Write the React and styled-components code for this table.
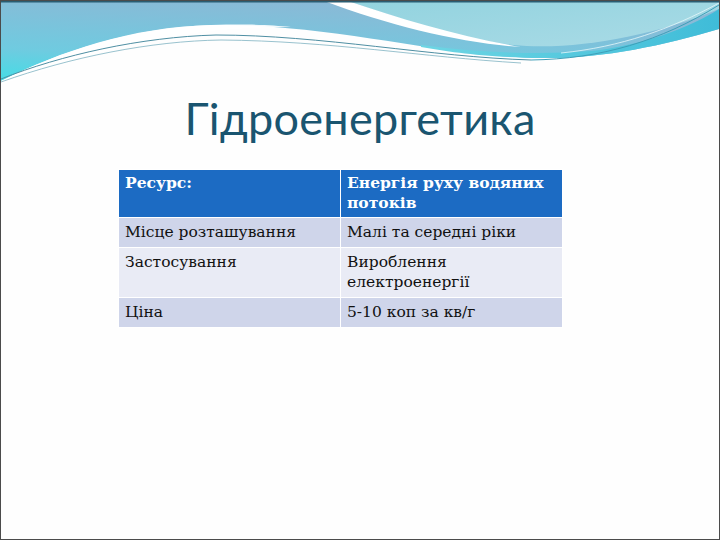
import React from "react";
import styled, { createGlobalStyle } from "styled-components";

const Global = createGlobalStyle`
  html, body { margin: 0; padding: 0; background: #ffffff; }
  #root { width: 720px; height: 540px; }
`;

const Slide = styled.div`
  width: 720px;
  height: 540px;
  box-sizing: border-box;
  border: 1px solid #4b4b4b;
  background: #fefefe;
  display: flex;
  flex-direction: column;
  overflow: hidden;
`;

const Banner = styled.svg`
  display: block;
  width: 718px;
  height: 88px;
  flex: none;
`;

const Title = styled.h1`
  margin: 1px 0 0 0;
  font-family: Lato, "Open Sans", sans-serif;
  font-weight: 400;
  font-size: 45px;
  line-height: 56px;
  color: #1a5570;
  text-align: center;
  letter-spacing: 0.3px;
`;

const Table = styled.table`
  margin: 23px 0 0 117px;
  width: 445px;
  border-collapse: collapse;
  table-layout: fixed;
  font-family: "DejaVu Serif", "Liberation Serif", serif;
  font-size: 15.5px;
  line-height: 20px;
`;

const Row = styled.tr`
  background: ${(p) => (p.$head ? "#1c6bc3" : p.$odd ? "#cfd5ea" : "#e9ebf5")};
  color: ${(p) => (p.$head ? "#ffffff" : "#111111")};
  font-weight: ${(p) => (p.$head ? 700 : 400)};
`;

const Cell = styled.td`
  border: 1px solid #ffffff;
  padding: ${(p) => (p.$head ? "3px 6px 4px 6px" : "4px 6px 5px 6px")};
  vertical-align: top;
  text-align: left;
`;

const rows = [
  ["Місце розташування", "Малі та середні ріки"],
  ["Застосування", "Вироблення електроенергії"],
  ["Ціна", "5-10 коп за кв/г"],
];

function Waves() {
  return (
    <Banner viewBox="0 0 718 88" preserveAspectRatio="none">
      <defs>
        <linearGradient id="gl" x1="0" y1="1" x2="0.4" y2="0">
          <stop offset="0" stopColor="#44dde6" />
          <stop offset="0.35" stopColor="#6fcbe0" />
          <stop offset="1" stopColor="#8ab9d6" />
        </linearGradient>
        <linearGradient id="gr" x1="0" y1="0" x2="1" y2="1">
          <stop offset="0" stopColor="#92d3df" />
          <stop offset="1" stopColor="#aadbe6" />
        </linearGradient>
        <linearGradient id="gc" x1="0" y1="0" x2="1" y2="0">
          <stop offset="0" stopColor="#6ed6e4" />
          <stop offset="1" stopColor="#3fbcd8" />
        </linearGradient>
      </defs>
      <path
        d="M0,0 H718 V28 C660,45 600,58 540,57 C440,56 330,22 210,24 C130,26 60,50 0,80 Z"
        fill="url(#gl)"
      />
      <path
        d="M347,0 C400,18 460,38 512,44 C570,50 650,36 718,8 V0 Z"
        fill="url(#gr)"
      />
      <path
        d="M420,44 C480,52 540,54 590,50 C640,45 690,26 718,8 V28 C660,45 600,58 540,57 C480,56 450,51 420,46 Z"
        fill="url(#gc)"
      />
      <path d="M323,0 C390,25 460,42 520,46 C460,36 400,18 347,0 Z" fill="#ffffff" />
      <path
        d="M0,80 C60,50 130,27 210,24 C250,23 270,24 290,26 C220,26 150,34 80,58 C50,68 20,76 0,84 Z"
        fill="#ffffff"
        opacity="0.9"
      />
      <path
        d="M0,78 C60,54 140,36 215,34 C320,34 430,56 530,59"
        fill="none"
        stroke="#4f8fa3"
        strokeWidth="1"
      />
      <path
        d="M0,81 C70,56 150,40 220,39 C330,40 420,56 520,62"
        fill="none"
        stroke="#7fb3c2"
        strokeWidth="0.8"
      />
      <path
        d="M530,59 C600,58 660,40 718,4"
        fill="none"
        stroke="#3e9fb8"
        strokeWidth="1"
      />
      <path
        d="M560,52 C620,46 670,28 718,2"
        fill="none"
        stroke="#e6f7fa"
        strokeWidth="0.8"
      />
      <rect x="0" y="0" width="718" height="1.5" fill="#2a5d72" />
    </Banner>
  );
}

export default function App() {
  return (
    <>
      <Global />
      <Slide>
        <Waves />
        <Title>Гідроенергетика</Title>
        <Table>
          <tbody>
            <Row $head>
              <Cell $head>Ресурс:</Cell>
              <Cell $head>Енергія руху водяних потоків</Cell>
            </Row>
            {rows.map((r, i) => (
              <Row key={r[0]} $odd={i % 2 === 0}>
                <Cell>{r[0]}</Cell>
                <Cell>{r[1]}</Cell>
              </Row>
            ))}
          </tbody>
        </Table>
      </Slide>
    </>
  );
}
